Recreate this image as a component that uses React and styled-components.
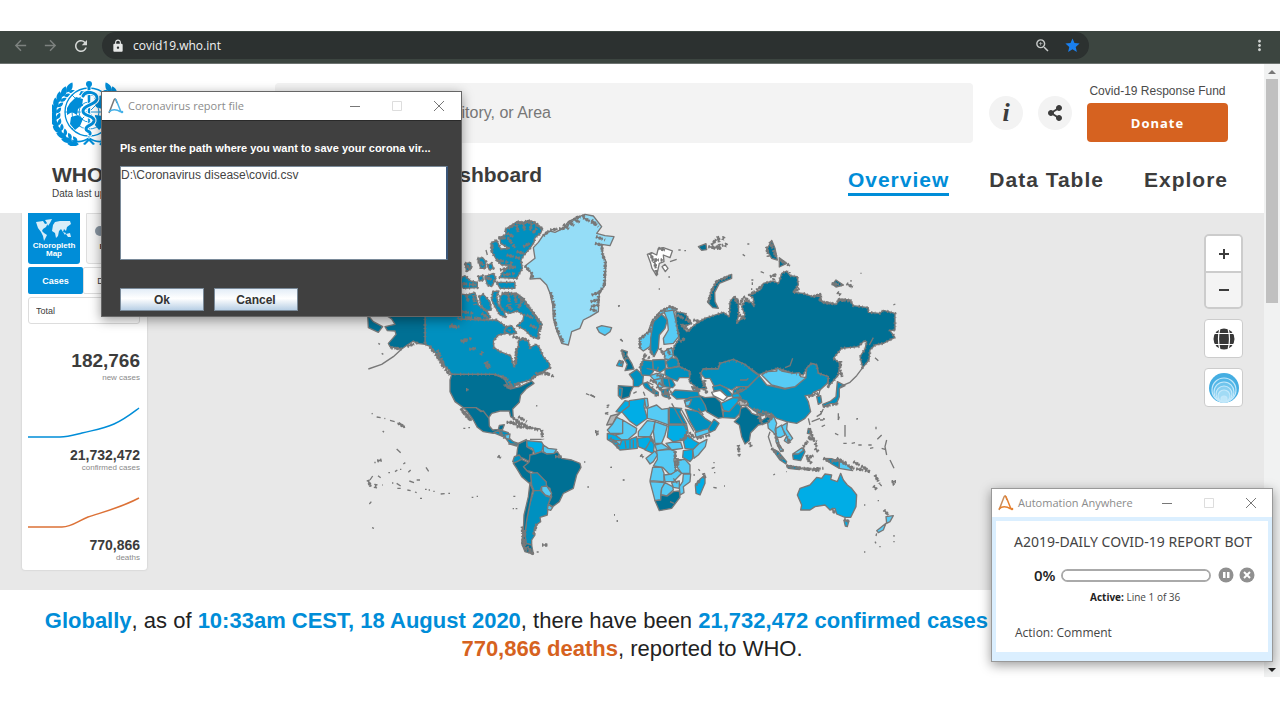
import React from "react";
import styled, { createGlobalStyle, css } from "styled-components";
import { MdArrowBack, MdArrowForward, MdRefresh, MdLock, MdZoomIn, MdStar, MdMoreVert } from "react-icons/md";
import { FaShareAlt } from "react-icons/fa";

const arial = '"Liberation Sans", Arial, sans-serif';
const segoe = '"Open Sans", "Noto Sans", sans-serif';

const blue = "#008dd8";
const orange = "#d66220";

const Global = createGlobalStyle`
  * { box-sizing: border-box; }
  body { margin: 0; background: #fff; font-family: ${arial}; color: #3c3c3c; }
  button, input, textarea, select { font: inherit; color: inherit; margin: 0; }
`;

const Page = styled.div`
  position: relative;
  padding: 31px 0 43px;
`;

/* Browser chrome */
const BrowserBar = styled.header`
  display: flex;
  align-items: center;
  height: 33px;
  padding: 0 12px 3px;
  background: #3c4540;
  border-bottom: 1px solid #6d7370;
`;
const NavIcon = styled.button`
  display: flex;
  padding: 0;
  width: 30px;
  border: 0;
  background: none;
  color: ${(p) => (p.$dim ? "#7d827f" : "#d5d8d6")};
`;
const Address = styled.label`
  display: flex;
  align-items: center;
  flex: 1;
  height: 27px;
  margin-right: 162px;
  padding: 0 8px 0 9px;
  border-radius: 14px;
  background: #2c3130;
  color: #e6e8e7;
`;
const AddressInput = styled.input`
  flex: 1;
  min-width: 0;
  margin-left: 8px;
  padding: 0;
  border: 0;
  outline: 0;
  background: none;
  color: #f2f2f2;
  font-family: ${segoe};
  font-size: 12px;
`;
const AddressIcons = styled.span`
  display: flex;
  align-items: center;
  gap: 13px;
`;

/* Web page */
const Viewport = styled.div`
  display: flex;
`;
const Content = styled.main`
  flex: 1;
  min-width: 0;
`;
const ScrollTrack = styled.div`
  display: flex;
  flex-direction: column;
  align-items: center;
  width: 16px;
  background: #f1f2f2;
`;
const ScrollArrow = styled.svg`
  width: 16px;
  height: 15px;
`;
const ScrollThumb = styled.div`
  width: 12px;
  height: 224px;
  background: #c0c0c0;
  margin-bottom: auto;
`;

const SiteHeader = styled.div`
  height: 149px;
  padding: 17px 36px 0 52px;
  background: #fff;
`;
const HeaderRow = styled.div`
  display: flex;
  align-items: flex-start;
`;
const LogoLink = styled.a`
  display: block;
  width: 223px;
`;
const Search = styled.input`
  flex: 1;
  min-width: 0;
  height: 60px;
  margin: 2px 16px 0 0;
  padding: 0 19px;
  border: 0;
  border-radius: 4px;
  background: #f3f3f3;
  font-size: 16px;
  &::placeholder { color: #777; opacity: 1; }
`;
const RoundButton = styled.button`
  display: flex;
  align-items: center;
  justify-content: center;
  width: 34px;
  height: 34px;
  margin: 15px 15px 0 0;
  padding: 0;
  border: 0;
  border-radius: 50%;
  background: #f3f3f3;
  color: #3c3c3c;
`;
const InfoGlyph = styled.span`
  font: italic bold 26px/26px "Liberation Serif", serif;
`;
const Fund = styled.div`
  display: flex;
  flex-direction: column;
  gap: 4px;
  width: 141px;
  padding-top: 2px;
  font-size: 12px;
  line-height: 16px;
  text-align: center;
  white-space: nowrap;
  color: #4a4a4a;
`;
const Donate = styled.button`
  height: 39px;
  border: 0;
  border-radius: 4px;
  background: ${orange};
  color: #fff;
  font: bold 13px ${segoe};
  letter-spacing: 1px;
`;
const TitleRow = styled.div`
  display: flex;
  justify-content: space-between;
  align-items: flex-start;
  padding-top: 13px;
`;
const SiteTitle = styled.h1`
  margin: 0;
  font-size: 21px;
  line-height: 24px;
  white-space: nowrap;
`;
const Updated = styled.p`
  margin: 0;
  font-size: 10px;
  line-height: 14px;
`;
const Tabs = styled.nav`
  display: flex;
  gap: 40px;
  padding-top: 4px;
`;
const Tab = styled.a`
  border-bottom: 3px solid ${(p) => (p.$active ? blue : "transparent")};
  color: ${(p) => (p.$active ? blue : "#3c3c3c")};
  font-size: 21px;
  font-weight: bold;
  line-height: 26px;
  letter-spacing: 1px;
  text-decoration: none;
  white-space: nowrap;
`;

const MapPanel = styled.section`
  display: flex;
  justify-content: space-between;
  height: 377px;
  padding: 0 21px 0 22px;
  background: #e8e8e8;
  overflow: hidden;
`;
const StatsCard = styled.aside`
  width: 125px;
  height: 357px;
  padding: 0 7px 0 6px;
  background: #fff;
  border-radius: 0 0 3px 3px;
  box-shadow: 0 0 2px #bbb;
`;
const MapWrap = styled.div`
  flex: 1;
  display: flex;
  justify-content: center;
  padding-right: 86px;
`;
const ButtonRow = styled.div`
  display: flex;
  gap: ${(p) => p.$gap}px;
  margin-bottom: 3px;
`;
const MapTypeButton = styled.button`
  display: flex;
  flex-direction: column;
  align-items: center;
  flex: 1;
  height: 51px;
  padding: 5px 0 0;
  border: ${(p) => (p.$active ? 0 : "1px solid #ddd")};
  border-radius: 0 0 3px 3px;
  background: ${(p) => (p.$active ? blue : "#f6f6f6")};
  color: ${(p) => (p.$active ? "#fff" : "#3c3c3c")};
  font-size: 8px;
  font-weight: bold;
  line-height: 8px;
`;
const MetricButton = styled.button`
  flex: 1;
  height: 27px;
  padding: 0;
  border: ${(p) => (p.$active ? 0 : "1px solid #ddd")};
  border-radius: 2px;
  background: ${(p) => (p.$active ? blue : "#fff")};
  color: ${(p) => (p.$active ? "#fff" : "#3c3c3c")};
  font-size: 9px;
  font-weight: ${(p) => (p.$active ? "bold" : "normal")};
`;
const Period = styled.select`
  appearance: none;
  display: block;
  width: 100%;
  height: 27px;
  padding: 0 7px;
  border: 1px solid #ddd;
  border-radius: 3px;
  background: #fff;
  font-size: 9px;
`;
const Stat = styled.div`
  margin-top: ${(p) => (p.$large ? 26 : 8)}px;
  text-align: right;
  font-size: 8px;
  line-height: 12px;
  color: #8a8a8a;
`;
const StatNumber = styled.strong`
  display: block;
  color: #3c3c3c;
  font-size: ${(p) => (p.$large ? 19 : 14)}px;
  line-height: ${(p) => (p.$large ? 22 : 14)}px;
`;
const Spark = styled.svg`
  display: block;
  width: 100%;
  height: 34px;
  margin-top: ${(p) => p.$top}px;
`;
const Controls = styled.div`
  display: flex;
  flex-direction: column;
  gap: 10px;
  width: 39px;
  padding-top: 21px;
`;
const ZoomGroup = styled.div`
  border: 2px solid #ccc;
  border-radius: 5px;
  overflow: hidden;
`;
const ZoomButton = styled.button`
  display: flex;
  align-items: center;
  justify-content: center;
  width: 100%;
  height: 35px;
  padding: 0;
  border: 0;
  background: #fff;
  ${(p) => p.$low && css`
    height: 36px;
    border-top: 2px solid #ccc;
    background: #f4f4f4;
  `}
`;
const ControlButton = styled.button`
  display: flex;
  align-items: center;
  justify-content: center;
  height: 39px;
  padding: 0;
  border: 1px solid #ccc;
  border-radius: 4px;
  background: #fff;
`;
const Summary = styled.p`
  margin: 0;
  padding: 17px 30px 14px;
  color: #222;
  font-size: 22px;
  line-height: 28px;
  text-align: center;
`;
const Strong = styled.strong`
  color: ${(p) => p.$color};
`;

/* Desktop windows floating over the browser */
const Win = styled.section`
  position: absolute;
  display: flex;
  flex-direction: column;
  left: ${(p) => p.$left};
  right: ${(p) => p.$right};
  top: ${(p) => p.$top}px;
  width: ${(p) => p.$width}px;
  border: 1px solid ${(p) => p.$edge};
  box-shadow: 0 3px 11px rgba(0, 0, 0, 0.4);
  background: #fff;
  font-family: ${segoe};
`;
const WinBar = styled.div`
  display: flex;
  align-items: center;
  height: 28px;
  padding: 0 ${(p) => p.$end}px 0 6px;
  background: #fff;
  color: #8b8b8b;
`;
const WinTitle = styled.h2`
  flex: 1;
  margin: 0 0 0 4px;
  font-size: 11px;
  font-weight: normal;
  line-height: 16px;
  white-space: nowrap;
`;
const WinButtons = styled.div`
  display: flex;
  gap: 30px;
`;
const WinButton = styled.button`
  display: flex;
  width: 12px;
  height: 12px;
  padding: 0;
  border: 0;
  background: none;
`;
const PromptBody = styled.div`
  padding: 19px 13px 5px 18px;
  border-top: 1px solid #2a2a2a;
  background: #404040;
  font-family: ${arial};
`;
const PromptLabel = styled.label`
  display: block;
  color: #fff;
  font-size: 11px;
  font-weight: bold;
  line-height: 16px;
  white-space: nowrap;
`;
const PromptText = styled.textarea`
  display: block;
  width: 100%;
  height: 94px;
  margin: 10px 0 28px;
  padding: 1px 0;
  border: 1px solid #7a8a99;
  border-right: 2px solid #3a5578;
  border-radius: 0;
  outline: 0;
  resize: none;
  background: #fff;
  color: #444;
  font-size: 12px;
  line-height: 14px;
`;
const SwingButton = styled.button`
  width: 84px;
  height: 23px;
  padding: 0;
  border: 1px solid #7a8a99;
  background: linear-gradient(#e3edf7, #fff 45%, #b8cfe5);
  color: #333;
  font-size: 12px;
  font-weight: bold;
`;
const SwingRow = styled.div`
  display: flex;
  gap: 10px;
`;
const BotBody = styled.div`
  height: 144px;
  padding: 10px 0 0 18px;
  border: 4px solid #dbefff;
  border-bottom-width: 9px;
  color: #444;
`;
const BotName = styled.p`
  margin: 0;
  font-family: "Noto Sans", sans-serif;
  font-size: 14px;
  line-height: 22px;
  white-space: nowrap;
`;
const BotProgress = styled.div`
  display: flex;
  align-items: center;
  gap: 5px;
  margin: 12px 0 0 20px;
  height: 20px;
`;
const Percent = styled.label`
  color: #222;
  font-size: 15px;
  font-weight: 600;
`;
const Bar = styled.progress`
  appearance: none;
  width: 150px;
  height: 13px;
  margin-right: 2px;
  border: 2px solid #aaa;
  border-radius: 7px;
  background: #fff;
  overflow: hidden;
  &::-webkit-progress-bar { background: #fff; }
`;
const BotLine = styled.p`
  margin: 5px 0 0 76px;
  font-size: 10px;
  line-height: 14px;
  b { color: #222; }
`;
const BotAction = styled.p`
  margin: 19px 0 0 1px;
  font-size: 12px;
  line-height: 20px;
`;
const RoundIcon = styled.button`
  display: flex;
  padding: 0;
  border: 0;
  background: none;
`;

/* Map drawing. Each sheet is drawn at three times its size; "rough" marks how many of its lands have a broken coast. */
const D = "#007094", M = "#0090bf", B = "#00ade6", L = "#56cbf5", G = "#95ddf7", W = "#fff", N = "#b5b5b5";
const sheets = [
  {
    x: 350, y: 205, rough: 14,
    land: [
      [M, "M225 330V418L240 424 262 450 272 470 296 495 305 508H432L462 515 465 545 490 548 505 535 540 525 570 505 600 488 598 475 580 455 567 425 558 418 540 428 535 408 518 398 505 408 505 425 497 440 500 470 492 486 482 452 450 440 432 428 430 408 445 390 470 385 478 375 455 355 440 345 400 345 370 335 335 338 320 320Z"],
      [M, "M320 265L350 270 375 263 385 300 410 320 422 338 400 345 325 342Z"],
      [M, "M450 275L465 262 500 266 520 280 540 310 555 330 577 358 565 378 565 402 545 395 525 375 500 362 518 348 522 330 500 318 480 325 460 318 450 300Z"],
      [M, "M388 275L400 268 420 290 424 315 408 318 392 300Z"],
      [M, "M428 260L447 258 440 275 445 300 462 320 468 338 450 330 435 305 425 285Z"],
      [M, "M468 365L485 362 500 385 480 388 462 380Z"],
      [M, "M450 98L468 88 466 72 480 65 500 50 520 52 535 46 550 50 560 62 578 70 572 85 555 98 552 112 540 130 522 150 513 165 517 190 500 220 450 218 455 205 472 190 475 180 455 180 440 165 425 140 423 115 440 105 452 132 478 130 452 115Z"],
      [M, "M440 232H495V250H450Z"],
      [M, "M383 160L398 158 408 170 405 190 392 190Z"],
      [M, "M345 175L362 173 364 190 350 200Z"],
      [M, "M325 222L345 212 362 228 382 232 382 248 340 250Z"],
      [M, "M405 215L430 205 438 220 425 245 412 240Z"],
      [M, "M412 180L425 175 430 190 418 195Z"],
      [M, "M385 215L398 212 400 225 388 228Z"],
      [D, "M100 325H225V418L200 415 190 408 172 420 155 432 120 425 115 415 128 400 138 388 135 378 112 377 105 365 135 358 125 342Z"],
      [D, "M53 330L70 350 98 365 85 382 55 368Z"],
      [D, "M305 508H432L462 520 480 552 510 545 545 528 552 535 530 550 512 570 508 592 488 612 490 640 482 635 478 618 450 618 425 625 415 640 395 618 378 608 340 608 315 590 300 560 300 525Z"],
      [G, "M525 183L555 160 550 128 565 112 580 90 600 78 615 82 640 70 655 50 680 38 705 28 730 33 755 65 740 85 765 92 792 95 780 122 755 118 758 150 768 170 765 240 748 265 745 320 720 335 700 345 690 370 665 380 655 420 635 415 618 370 610 340 608 300 600 265 590 240 570 220 540 222 545 205Z"],
      [L, "M740 368L755 362 785 368 780 380 765 391 748 382Z"],
    ],
    coast: [
      "M580 92L600 75 640 70 680 38 705 32", "M640 58L660 75M655 50L672 62M670 42L690 52M700 38L740 60M725 45L745 65", "M755 118L758 150 766 170 763 240 746 265 744 300 722 305", "M738 95L765 105M735 115L755 120M725 270L748 262M722 290L742 285M720 312L740 318", "M602 262L612 300 614 345 622 375 640 412", "M525 183L545 205 548 218",
      "M425 140L428 110M475 70L500 55 550 50 575 70M445 98L475 100 495 128M440 165L475 172M450 195L500 185M470 150L510 160",
      "M500 60L505 85M520 55L525 80M545 55L540 78M560 70L548 85M472 85L490 95M520 125L540 115M500 140L520 145M460 210L495 205M485 170L480 185",
      "M240 426L262 455 280 485 300 510", "M262 435L282 480", "M172 424L205 412", "M155 432L120 428", "M455 265L500 268 540 310 572 358 565 402", "M475 270L480 300M495 272L500 300M515 290L505 310M530 330L550 340M540 360L560 370M470 300L490 318",
      "M345 175L362 195M330 235L380 240M385 165L408 190M405 215L438 230M345 338L400 342", "M370 270L375 300M350 272L355 290M395 325L415 340M335 320L370 325", "M298 365H328M303 358L325 372M332 408L365 400M338 412L350 405M358 433L378 430M392 450L398 440M405 472L415 492M410 470L420 488", "M455 515L475 525 485 545 500 535 515 545M465 540L480 550M540 528L560 505 600 508M580 500L612 515M500 430L495 480M488 395L530 405",
      "M348 554H356", "M333 610L345 630 362 645", "M490 640L515 655 540 668M480 652L510 662",
    ],
    line: ["M155 432L130 455 95 478 55 492", "M95 445L100 448M85 415L90 418M408 135L412 150M708 566L718 570M725 572L735 577M558 602L562 603M765 627L772 624M770 608L776 605M805 303L808 305M812 402L818 410", "M540 668L570 672 578 688M65 625L68 627M80 636L92 638M103 640L106 641M120 646L134 650M142 654L150 658M150 655L165 668"],
  },
  {
    x: 590, y: 205, rough: 1,
    land: [
      [D, "M258 320L285 325 305 355 290 362 272 358 290 380 320 355 345 340 400 322 418 335 420 290 432 275 445 285 446 330 440 355 465 330 455 305 465 288 485 292 492 305 490 280 478 270 510 255 520 235 550 228 566 235 575 205 590 198 600 212 622 215 625 240 610 262 640 265 668 275 690 268 695 290 740 298 745 282 780 285 790 302 835 308V322L870 325 880 316 915 325V375L900 377 915 397 880 415 855 420 840 435 837 465 818 488 810 455 825 432 830 410 822 408 805 425 755 430 730 460 750 475 745 510 715 545V515L685 505 680 480 665 475 650 490 640 510 610 505 565 490 530 500 505 510 495 500 465 480 430 465 390 475 385 490 340 492 332 505 335 525 350 550 325 552 298 530 300 500 268 485 262 460 248 450 252 425 268 400 258 350Z"],
      [M, "M340 492L385 492 390 475 430 463 465 478 490 500 508 512 495 525 475 545 440 545 425 555 390 540 375 548 360 520 345 520 332 505Z"],
      [M, "M508 512L530 540 585 552 615 545 648 515 650 490 665 475 680 480 685 505 715 515 712 535 690 555 670 562 665 570 645 572 655 590 662 620 645 640 620 655 590 650 560 640 540 625 515 632 490 615 470 600 445 580 440 565 475 545 495 525Z"],
      [L, "M515 510L530 500 560 498 562 488 575 498 610 505 628 503 632 515 648 518 615 545 585 550 545 540Z"],
      [M, "M368 545L390 540 410 550 430 572 412 575 392 555 372 558Z"],
      [W, "M365 562L390 556 412 575 400 587 370 572Z"],
      [M, "M430 556L450 545 475 545 455 560 430 565Z"],
      [B, "M425 568L445 565 452 576 430 578Z"],
      [B, "M393 595L430 578 450 580 440 595 418 622 400 615Z"],
      [M, "M400 618L418 620 440 595 455 600 450 625 435 640 400 638Z"],
      [N, "M445 585L470 588 475 600 450 602Z"],
      [D, "M325 570L345 578 375 576 392 592 400 637 385 640 350 620 335 600Z"],
      [M, "M243 568L255 555 300 558 325 560 328 574 300 580 260 582Z"],
      [L, "M305 545L325 550 330 558 310 556Z"],
      [L, "M150 430L148 402 175 380 185 350 210 320 240 305 262 312 250 320 215 325 195 350 188 380 180 425 160 438Z"],
      [M, "M190 350L215 328 232 345 225 370 208 390 205 430 192 455 182 440 182 400Z"],
      [L, "M222 320L250 315 258 350 266 395 250 415 222 418 220 400 235 375 232 345Z"],
      [L, "M222 440L245 428 250 450 240 465 225 462Z"],
      [D, "M95 435L112 440 110 450 125 475 132 492 105 497 112 478 100 458Z"],
      [B, "M80 482L88 466 100 470 97 485Z"],
      [D, "M85 542L130 545 122 560 118 575 95 582 88 575Z"],
      [M, "M85 548L97 550 94 578 85 572Z"],
      [M, "M118 508L140 493 160 512 158 535 145 545 130 545 130 525Z"],
      [M, "M150 485L160 465 188 468 190 500 180 512 155 510Z"],
      [M, "M188 465L225 463 228 490 210 502 190 492Z"],
      [M, "M228 470L245 458 262 462 268 482 235 490Z"],
      [M, "M225 492L268 485 300 500 298 518 268 518 262 528 245 522 225 510Z"],
      [L, "M180 512L200 505 222 508 218 520 192 525Z"],
      [M, "M218 518L245 522 255 540 248 548 220 545Z"],
      [L, "M192 525L215 520 220 545 210 552Z"],
      [M, "M158 535L172 532 182 548 205 562 205 572 190 565 165 548Z"],
      [M, "M212 555L240 550 235 560 240 580 222 575Z"],
      [D, "M425 208L425 220 388 235 374 262 375 290 385 310 368 308 353 292 365 255 380 228Z"],
      [W, "M172 148L185 143 200 150 205 130 220 128 247 138 240 158 220 150 222 170 208 175 200 212 186 190 182 175Z"],
      [W, "M216 185L225 178 234 190 226 200Z"],
      [D, "M325 125L348 116 350 134 335 136Z"],
      [D, "M530 135L545 106 555 130 562 165 545 160Z"],
      [D, "M568 158L590 175 568 186Z"],
      [D, "M727 238L738 225 760 240 738 246Z"],
      [M, "M680 575L692 572 695 592 685 598Z"],
      [W, "M672 562L690 553 686 572Z"],
      [M, "M742 530L765 542 748 550 748 575 740 595 720 596 700 606 698 598 722 588 738 575Z"],
    ],
    coast: [
      "M150 430V402L178 380 190 345 215 318 240 305 262 314", "M365 120L385 95 390 135M370 130L400 120M355 125L385 130M402 95L398 105M410 115L405 125", "M180 145L195 175 200 210M185 165L220 165M205 130L225 135", "M355 292L366 255 380 230 420 212",
      "M450 300L460 275 480 290M448 330L470 345M432 275L445 300", "M478 272L520 240M540 215L555 210 550 225", "M610 262L628 250M670 275L692 268 690 290M700 292L730 296M745 285L785 288", "M275 360L300 378M262 330L300 350M310 345L330 350M270 410L285 400",
      "M95 435L105 460 115 460M90 475L100 470", "M150 490L165 450 180 460M178 430L190 455M200 510L235 520M180 525L230 545M200 545L240 570M225 555L240 582M185 545L200 575M215 570L245 560M210 430L225 455M232 430L240 450", "M345 525L340 548 352 565M310 548L330 560", "M752 468L750 495 758 520", "M725 236L760 240M770 236L788 246M742 262L752 270", "M530 125L535 155M540 110L560 160M568 165L600 182", "M440 560L470 548M450 580L475 600M490 612L550 630M700 605L745 595M655 575L685 565",
    ],
    line: ["M818 488L800 512 780 532 750 545M855 458L865 467M850 398L838 420", "M585 488L600 482 608 460M450 525H470L475 520", "M472 117H478M458 148L465 153M265 135H272M283 137H288M240 170L260 163M235 216H240M206 252H210M84 303L90 302M90 403L98 408M484 225H490M487 232V240M512 200L522 204M597 203H602M783 225V230M813 203V206M910 300L916 297M485 250V255", "M690 630L700 612M745 625V645M702 640V645M800 640L802 644M665 650L690 640M2 569L15 576M45 625L55 628M50 602L58 600M130 565L140 560M160 560L165 572", "M200 500L205 485M170 490L205 498M170 530L190 540M235 520L240 545M215 520L212 540"],
  },
  {
    x: 350, y: 380, rough: 0,
    land: [
      [D, "M340 83H378L393 95 400 93 417 115 418 138 428 150 445 148 448 136 463 134 458 148 440 155 430 160 400 155 382 142 370 120 350 92Z"],
      [M, "M430 158L450 150 475 158 478 175 490 185 505 190 500 198 480 192 465 172Z"],
      [L, "M465 165L480 162 478 178 468 175Z"],
      [D, "M505 192L530 180 530 200 550 212 548 222 540 225 538 245 520 235 500 228 502 210Z"],
      [B, "M530 182L575 186 580 195 575 215 555 222 548 205 532 200Z"],
      [L, "M580 195L595 205 620 208 612 220 590 222 580 215Z"],
      [D, "M540 225L555 222 575 215 590 222 612 220 622 215 635 235 665 240 690 250 693 262 680 285 670 325 640 340 628 365 608 380 595 372 605 350 600 325 590 320 588 305 565 285 545 275 530 272 520 258 538 245Z"],
      [M, "M493 230L508 225 515 236 498 250 488 245Z"],
      [D, "M490 250L515 238 535 248 520 260 530 272 542 280 545 305 538 310 515 290 500 265Z"],
      [M, "M542 280L562 278 588 305 590 320 575 320 570 332 552 332 545 315Z"],
      [L, "M575 320L590 318 605 340 600 350 585 345 575 332Z"],
      [M, "M552 332H572L588 348 602 352 595 372 592 405 570 412 572 425 558 435 552 455 555 465 545 480 545 495 528 490 525 460 530 420 540 370Z"],
      [L, "M595 373L608 382 602 391 592 388Z"],
      [D, "M540 308L548 330 540 370 530 420 525 460 528 490 545 495 550 522 525 515 515 490 520 450 522 405 535 350Z"],
    ],
    coast: ["M335 88L350 108 365 122M345 95L360 118", "M517 440L520 495 530 512 552 522M525 450L522 490 545 515", "M470 127H500L535 145M500 140L540 143 565 150M505 110L530 125", "M445 150L465 175M575 150L578 178", "M615 230H635M560 432L550 465", "M576 495H592", "M54 300L62 320M78 312L76 325M145 130L165 142M82 243L95 240", "M444 228L452 234"],
    line: ["M340 145H346M355 143H360M98 153L102 157M140 207L152 218M228 262L236 274M115 278H120M135 275L142 270M150 268H154M160 252L166 248M175 277L182 270M178 303L192 308M200 300H210M140 310L152 318M142 325H152M172 330L182 332M195 336L200 338M210 355H216M225 328H230M236 330H240M250 334H254M272 342L284 341M295 340H300M365 352H370M380 349H384M84 287L92 293M68 288L60 300M126 309H130M58 372L64 365M66 443L72 445M96 315H98M75 250V245M490 349H496M488 386H492M497 386H502M560 516H566M702 246H706M712 321H717M781 262H786M820 300H824M792 404H795M800 423H804M735 155H745M738 162H746", "M475 192H500L530 178M540 178H575"],
  },
  {
    x: 590, y: 380, rough: 0,
    land: [
      [D, "M433 125L448 110 452 85 468 80 480 92 485 100 512 110 514 122 540 105 550 108 540 125 520 132 505 135 482 158 478 182 465 192 455 170 448 135Z"],
      [M, "M283 62L300 52 330 50 345 75 350 90 330 98 312 90 290 80Z"],
      [L, "M285 65L305 58 298 75 288 80Z"],
      [M, "M286 88L325 95 345 115 372 132 365 145 318 155 300 125Z"],
      [L, "M315 158L355 146 358 158 318 172Z"],
      [M, "M372 118L387 130 375 150 360 157 355 146Z"],
      [B, "M78 95L105 62 118 65V78L92 98Z"],
      [N, "M50 135L62 108 90 100 78 112 68 132Z"],
      [B, "M95 95L118 78V62L165 55 162 80 172 115 140 138 118 122Z"],
      [L, "M163 55L172 55 175 78 168 85Z"],
      [L, "M172 85L200 75 215 88 235 85V135L200 122 172 115Z"],
      [M, "M238 82L275 85 270 95 290 132H238Z"],
      [L, "M52 150L68 132 80 112 98 120V160L60 160Z"],
      [L, "M98 120L140 145 138 158 110 182 95 180 75 165 98 160Z"],
      [L, "M145 155L172 122 195 125 190 150 180 170 145 170Z"],
      [L, "M195 125L232 138 225 165 215 190 195 190 190 155Z"],
      [B, "M236 135H290L294 155 280 180 250 185 232 172Z"],
      [B, "M280 182L295 165 310 180 328 190 310 208 285 205Z"],
      [L, "M308 210L328 190 351 178 346 200 325 225 312 235Z"],
      [B, "M142 175L185 170 182 190 165 208 145 200Z"],
      [B, "M185 175L193 195 190 220 165 210Z"],
      [B, "M52 160L75 165 95 180 120 178 140 170 142 205 90 210 68 188 52 178Z"],
      [L, "M75 182L95 182 90 195Z"],
      [L, "M195 195L215 190 238 205 200 213Z"],
      [L, "M228 190L250 186 272 187 278 205 245 210Z"],
      [L, "M200 212L240 208 258 215 252 240 258 275 240 285 218 262 190 258 202 238Z"],
      [L, "M168 235L195 213 202 225 190 245 180 252Z"],
      [B, "M280 212L308 208V235L300 245 278 232Z"],
      [L, "M262 240L285 238 300 255V280L275 280 262 262Z"],
      [L, "M188 262H215L222 280V305L180 302Z"],
      [L, "M222 285L245 282 262 270 275 280 250 305 225 305Z"],
      [L, "M280 282H302L300 305 280 320 282 338 270 345 268 320 278 305Z"],
      [L, "M180 305L225 308 214 330 212 360 195 362Z"],
      [L, "M215 325L225 308 248 320 250 330 230 348 213 345Z"],
      [L, "M245 308L268 303V325L250 322Z"],
      [D, "M195 362L212 360 213 345 232 348 250 335 268 333 270 352 245 385 208 392Z"],
      [B, "M345 285V310L330 345 318 340 316 315 330 298Z"],
      [L, "M533 130L550 106 560 130 555 150 562 172 548 155 535 145Z"],
      [L, "M558 145L575 135 585 165 572 172 562 172 568 195 580 212 572 215 558 185Z"],
      [L, "M575 138L592 128 590 148 608 175 594 190 583 182 590 168 580 150Z"],
      [M, "M545 205L565 215 590 245 588 252 570 240Z"],
      [M, "M590 256L632 262 628 269 595 265Z"],
      [M, "M608 225L640 203 645 215 632 242 610 238Z"],
      [L, "M608 222L635 204 642 210 625 222Z"],
      [M, "M702 235L725 236 748 245V265L725 252Z"],
      [L, "M748 242L772 255 788 272 765 268 748 265Z"],
      [M, "M655 145L662 148 662 162 652 160Z"],
      [B, "M622 345L630 325 660 315 680 292 695 295 705 282 725 285 722 298 742 305 752 280 760 300 772 315 785 325 800 345 798 380 782 412 765 412 740 402 735 385 720 390 705 375 675 380 660 390 632 390 635 375Z"],
      [B, "M762 422L776 425 772 440 766 438Z"],
      [L, "M888 410L910 407 900 425 890 430Z"],
      [L, "M888 430L880 450 865 458 860 452Z"],
    ],
    coast: ["M255 215L258 275M262 235L265 262M292 155L280 182", "M500 100L550 112M505 112L520 135M535 125L552 105", "M555 160L565 195 580 215M590 170L600 190", "M545 205L580 240M590 258L650 268 700 265M640 265L690 272", "M650 235L675 225M655 240L665 250M650 225L658 248M675 205L685 215", "M655 170L680 185M665 165L680 200M640 200L660 175M658 145L665 165", "M700 235L720 245 745 240 790 265 820 270 840 275M740 235L770 250M790 245L835 270", "M855 285L868 310M850 318L860 328", "M882 390L895 405M905 305H918M908 312H915", "M270 180L300 170M180 170L195 195M60 175L80 190 85 205", "M762 418L778 425M725 385L735 400M478 188L484 200M445 195L448 230M15 155H25M18 162H25M152 225L160 232M298 158L315 175M320 175L360 165", "M318 315L330 300M340 280L345 295"],
    line: ["M245 70L290 150M275 90L312 155", "M325 85L340 105M105 182L108 205M120 180V205M130 180V203M255 240H275M250 295L262 310M240 365L252 370", "M540 155L535 170 545 200M655 115L660 135M690 95H698M700 115L703 118M765 135V170M800 116H804M858 140V148M862 178L875 165M890 180L885 200 890 225M900 240L912 265M735 160L745 165M760 190H770M785 190L795 188M805 195H815M835 195H845M840 205L850 203M875 205L885 208M695 140L705 135M745 120L748 110M550 285L555 282M588 275H590M365 265L374 262M370 248H374M372 278H376M370 322L380 324M402 318H405M325 268L330 272M310 285H315M62 262H66M98 300H102M72 405H75M80 423H84M822 375H826M863 362H867M912 465V470M910 485H914M868 500H872M822 516H826M855 485L858 490M860 460L858 468M868 310L875 318M0 45L12 50M45 100L55 97M680 110L695 100M690 120H700"],
  },
];

function WorldMap() {
  return (
    <svg width="534" height="348" viewBox="366 213 534 348" role="img" aria-label="World map of cases">
      {sheets.map((s) => (
        <g key={s.x + "-" + s.y} transform={`translate(${s.x} ${s.y}) scale(0.33333)`} stroke="#787878" strokeLinejoin="round">
          {s.land.map(([fill, d], i) => <path key={i} d={d} fill={fill} strokeWidth="4" />)}
          <g fill="none">
            {s.land.slice(0, s.rough).map(([, d], i) => (
              <path key={i} d={d} strokeWidth="9" strokeDasharray="3 9 2 14 4 7 2 11" />
            ))}
            {s.coast.map((d, i) => (
              <g key={i}>
                <path d={d} strokeWidth="10" strokeDasharray="4 5 7 3 2 6" />
                <path d={d} strokeWidth="5" strokeDasharray="11 3 8 5" />
              </g>
            ))}
            {s.line.map((d, i) => <path key={i} d={d} strokeWidth="4" />)}
          </g>
        </g>
      ))}
    </svg>
  );
}

function WhoEmblem() {
  const leaf = "M0 -3C4 -6 9 -5 12 -1C7 2 3 2 0 -3Z";
  const branch = [110, 122, 134, 146, 158, 170, 182, 194, 206, 218, 230].map((a) => {
    const t = (a * Math.PI) / 180;
    const x = 37 + 31 * Math.cos(t), y = 34 + 28 * Math.sin(t);
    return (
      <g key={a} transform={`translate(${x} ${y})`}>
        <path d={leaf} transform={`rotate(${a + 62}) scale(.95)`} />
        <path d={leaf} transform={`rotate(${a + 118}) scale(.6)`} />
      </g>
    );
  });
  return (
    <svg width="74" height="65" viewBox="0 0 74 65" fill={blue} role="img" aria-label="World Health Organization">
      {branch}
      <g transform="translate(74 0) scale(-1 1)">{branch}</g>
      <circle cx="37" cy="31" r="26" fill="#fff" />
      <g fill="none" stroke={blue}>
        <circle cx="37" cy="31" r="24" strokeWidth="1.3" />
        <circle cx="37" cy="31" r="17" strokeWidth=".9" />
        <circle cx="37" cy="31" r="10" strokeWidth=".9" />
        <path d="M13 31H61M37 7V55M20 14L54 48M54 14L20 48" strokeWidth=".9" />
      </g>
      <path d="M18 22L24 16 31 18 30 25 26 28 25 34 20 31 15 34 15 27ZM19 36L26 34 31 38 28 45 23 49 18 43ZM42 17L50 14 57 21 59 31 53 34 50 28 44 26ZM43 34L51 35 54 42 47 49 42 43ZM29 10L35 11 33 15 27 14Z" />
      <path d="M18 58C25 61 32 60 37 56C42 60 49 61 56 58L52 61C47 62 42 61 39 59L43 63 41 64 37 60 33 64 31 63 35 59C32 61 27 62 22 61Z" />
      <path d="M35 3H39L38 57H36Z" stroke="#fff" strokeWidth=".8" />
      <circle cx="37" cy="3" r="3" />
      <g fill="none" strokeLinecap="round">
        <path d="M31 15C34 9 46 11 45 18C44 24 31 24 31 30C31 36 43 34 42 40C41 45 34 44 34 48C34 51 39 50 38 53" stroke="#fff" strokeWidth="5" />
        <path d="M31 15C34 9 46 11 45 18C44 24 31 24 31 30C31 36 43 34 42 40C41 45 34 44 34 48C34 51 39 50 38 53" stroke={blue} strokeWidth="3" />
      </g>
    </svg>
  );
}

function MiniMap() {
  return (
    <svg width="38" height="24" viewBox="0 0 38 24" fill="#fff" opacity=".85" aria-hidden="true">
      <path d="M1 4L8 3 10 6 13 5 11 9 8 11 7 13 9 15 12 17 10 21 9 23 8 18 6 14 3 10ZM10 2L17 1 15 5 13 8 12 5ZM18 7L20 4 25 3 35 3 36 6 32 9 31 13 29 11 28 14 26 11 24 13 23 18 21 20 20 15 17 13ZM31 16L35 15 36 19 33 19ZM28 14L31 15 30 17Z" />
    </svg>
  );
}

function AaLogo({ a, b }) {
  return (
    <svg width="16" height="16" viewBox="0 0 16 16" fill="none" strokeWidth="1.5" aria-hidden="true">
      <path d="M1 15L6 2Q7 0 8 2L9 5" stroke={a} />
      <path d="M7 1Q8 1 9 4L13 14M1 14C4 11 8 11 13 14" stroke={b} />
      <circle cx="14" cy="14" r="1.3" fill={b} stroke="none" />
    </svg>
  );
}

function WindowButtons() {
  return (
    <WinButtons>
      <WinButton aria-label="Minimize"><svg width="12" height="12" stroke="#777"><path d="M1 6.5H11" /></svg></WinButton>
      <WinButton aria-label="Maximize"><svg width="12" height="12" fill="none" stroke="#ddd"><path d="M1.500 1.500H10.500V10.500H1.500Z" /></svg></WinButton>
      <WinButton aria-label="Close"><svg width="12" height="12" stroke="#777"><path d="M1 1L11 11M11 1L1 11" /></svg></WinButton>
    </WinButtons>
  );
}

export default function App() {
  return (
    <Page>
      <Global />
      <BrowserBar>
        <NavIcon $dim aria-label="Back"><MdArrowBack size={17} /></NavIcon>
        <NavIcon $dim aria-label="Forward"><MdArrowForward size={17} /></NavIcon>
        <NavIcon aria-label="Reload"><MdRefresh size={18} /></NavIcon>
        <Address>
          <MdLock size={14} />
          <AddressInput aria-label="Address" defaultValue="covid19.who.int" />
          <AddressIcons>
            <MdZoomIn size={17} color="#c8cbca" />
            <MdStar size={17} color="#1a80f0" />
          </AddressIcons>
        </Address>
        <MdMoreVert size={17} color="#d0d3d1" />
      </BrowserBar>

      <Viewport>
        <Content>
          <SiteHeader>
            <HeaderRow>
              <LogoLink href="#home"><WhoEmblem /></LogoLink>
              <Search type="search" aria-label="Search" placeholder="Search by Country, Territory, or Area" />
              <RoundButton aria-label="Information"><InfoGlyph>i</InfoGlyph></RoundButton>
              <RoundButton aria-label="Share"><FaShareAlt size={16} /></RoundButton>
              <Fund>
                <span>Covid-19 Response Fund</span>
                <Donate>Donate</Donate>
              </Fund>
            </HeaderRow>
            <TitleRow>
              <div>
                <SiteTitle>WHO Coronavirus Disease (Covid-19) Dashboard</SiteTitle>
                <Updated>Data last updated: 2020/8/18, 10:33am CEST</Updated>
              </div>
              <Tabs>
                <Tab href="#overview" $active>Overview</Tab>
                <Tab href="#table">Data Table</Tab>
                <Tab href="#explore">Explore</Tab>
              </Tabs>
            </TitleRow>
          </SiteHeader>

          <MapPanel>
            <StatsCard>
              <ButtonRow $gap={6}>
                <MapTypeButton $active><MiniMap />Choropleth<br />Map</MapTypeButton>
                <MapTypeButton>
                  <svg width="38" height="24" fill="#8794a0" aria-hidden="true"><circle cx="6" cy="12" r="5" /><circle cx="24" cy="10" r="7" /></svg>
                  Bubble<br />Map
                </MapTypeButton>
              </ButtonRow>
              <ButtonRow $gap={0}>
                <MetricButton $active>Cases</MetricButton>
                <MetricButton>Deaths</MetricButton>
              </ButtonRow>
              <Period aria-label="Period"><option>Total</option></Period>
              <Stat $large><StatNumber $large>182,766</StatNumber>new cases</Stat>
              <Spark $top={22} viewBox="0 0 112 34" fill="none" stroke={blue} strokeWidth="1.500" preserveAspectRatio="none">
                <path d="M0 31H32C40 31 46 29 54 27C66 24 75 23 86 18C97 13 103 8 111 2" />
              </Spark>
              <Stat><StatNumber>21,732,472</StatNumber>confirmed cases</Stat>
              <Spark $top={22} viewBox="0 0 112 34" fill="none" stroke="#dc7136" strokeWidth="1.500" preserveAspectRatio="none">
                <path d="M0 31H34C44 31 48 26 60 21C75 16 92 12 111 2" />
              </Spark>
              <Stat><StatNumber>770,866</StatNumber>deaths</Stat>
            </StatsCard>
            <MapWrap><WorldMap /></MapWrap>
            <Controls>
              <ZoomGroup>
                <ZoomButton aria-label="Zoom in"><svg width="12" height="12" stroke="#3c3c3c" strokeWidth="2"><path d="M1 6H11M6 1V11" /></svg></ZoomButton>
                <ZoomButton $low aria-label="Zoom out"><svg width="12" height="12" stroke="#3c3c3c" strokeWidth="2"><path d="M1 6H11" /></svg></ZoomButton>
              </ZoomGroup>
              <ControlButton aria-label="Globe view">
                <svg width="22" height="22" viewBox="0 0 22 22">
                  <circle cx="11" cy="11" r="10.500" fill="#383838" />
                  <path d="M0 5.500H22M0 16.500H22M7 0Q4 11 7 22M15 0Q18 11 15 22" stroke="#fff" strokeWidth="1.200" fill="none" />
                </svg>
              </ControlButton>
              <ControlButton aria-label="Bubble view">
                <svg width="30" height="30" viewBox="0 0 30 30" fill="none" stroke="#c4e8fa" strokeWidth="1.200">
                  <circle cx="15" cy="15" r="15" fill="#45aee2" stroke="none" />
                  <circle cx="15" cy="17" r="12" fill="#55b8e8" />
                  <circle cx="15" cy="19" r="10" fill="#70c5ed" />
                  <circle cx="15" cy="21" r="8" fill="#89d0f1" />
                  <circle cx="15" cy="23" r="6" fill="#a1dbf5" />
                  <circle cx="15" cy="26" r="3" fill="#bee7f9" />
                </svg>
              </ControlButton>
            </Controls>
          </MapPanel>

          <Summary>
            <Strong $color={blue}>Globally</Strong>, as of <Strong $color={blue}>10:33am CEST, 18 August 2020</Strong>, there have been{" "}
            <Strong $color={blue}>21,732,472 confirmed cases</Strong> of COVID-19, including{" "}
            <Strong $color={orange}>770,866 deaths</Strong>, reported to WHO.
          </Summary>
        </Content>
        <ScrollTrack aria-hidden="true">
          <ScrollArrow viewBox="0 0 16 15" fill="#777"><path d="M4 10L8 6 12 10Z" /></ScrollArrow>
          <ScrollThumb />
          <ScrollArrow viewBox="0 0 16 15" fill="#222"><path d="M4 6L8 10 12 6Z" /></ScrollArrow>
        </ScrollTrack>
      </Viewport>

      <Win $left="101px" $right="auto" $top={91} $width={361} $edge="#666">
        <WinBar $end={16}>
          <AaLogo a="#777" b="#46b1e8" />
          <WinTitle>Coronavirus report file</WinTitle>
          <WindowButtons />
        </WinBar>
        <PromptBody>
          <PromptLabel htmlFor="path">Pls enter the path where you want to save your corona vir...</PromptLabel>
          <PromptText id="path" spellCheck={false} defaultValue={"D:\\Coronavirus disease\\covid.csv"} />
          <SwingRow>
            <SwingButton>Ok</SwingButton>
            <SwingButton>Cancel</SwingButton>
          </SwingRow>
        </PromptBody>
      </Win>

      <Win $left="auto" $right="7px" $top={488} $width={282} $edge="#999">
        <WinBar $end={15}>
          <AaLogo a="#c98d5c" b="#e5802f" />
          <WinTitle>Automation Anywhere</WinTitle>
          <WindowButtons />
        </WinBar>
        <BotBody>
          <BotName>A2019-DAILY COVID-19 REPORT BOT</BotName>
          <BotProgress>
            <Percent htmlFor="progress">0%</Percent>
            <Bar id="progress" value={0} max={100} />
            <RoundIcon aria-label="Pause">
              <svg width="16" height="16"><circle cx="8" cy="8" r="7.500" fill="#909090" /><path d="M5 5H7.500V11H5ZM9 5H11.500V11H9Z" fill="#fff" /></svg>
            </RoundIcon>
            <RoundIcon aria-label="Stop">
              <svg width="16" height="16"><circle cx="8" cy="8" r="7.500" fill="#909090" /><path d="M5 5L11 11M11 5L5 11" stroke="#fff" strokeWidth="2" /></svg>
            </RoundIcon>
          </BotProgress>
          <BotLine><b>Active:</b> Line 1 of 36</BotLine>
          <BotAction>Action: Comment</BotAction>
        </BotBody>
      </Win>
    </Page>
  );
}
